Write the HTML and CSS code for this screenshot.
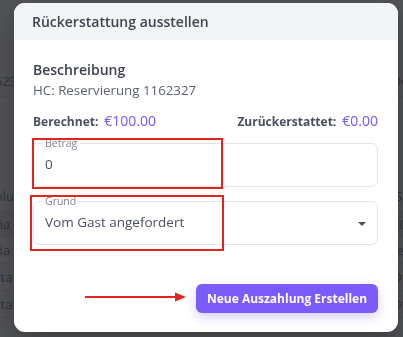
FILE: index.html
```html
<!DOCTYPE html>
<html lang="de">
  <head>
    <meta charset="UTF-8" />
    <meta name="viewport" content="width=device-width, initial-scale=1.0" />
    <title>Rückerstattung ausstellen</title>
    <link rel="stylesheet" href="styles.css">
  </head>
  <body>
    <div class="page">
      <div class="page-row page-row-top"><span>1162326</span><span>Details</span></div>
      <div class="page-row page-row-head"><span>Zahlung</span><span>Status</span></div>
      <div class="page-row page-row-alt"><span>Peña</span><span>€100.00</span></div>
      <div class="page-row"><span>Peña</span><span>Bezahlt</span></div>
      <div class="page-row page-row-low"><span>Karta</span><span>Offene</span></div>
      <div class="page-row"><span>Karta</span><span>Offene</span></div>
    </div>

    <div class="overlay">
      <div class="modal">
        <div class="modal-header">Rückerstattung ausstellen</div>

        <div class="modal-body">
          <div class="desc">
            <div class="desc-title">Beschreibung</div>
            <div class="desc-text">HC: Reservierung 1162327</div>
          </div>

          <div class="totals">
            <div class="total">
              <span class="total-label">Berechnet:</span>
              <span class="total-value">€100.00</span>
            </div>
            <div class="total">
              <span class="total-label">Zurückerstattet:</span>
              <span class="total-value">€0.00</span>
            </div>
          </div>

          <fieldset class="field">
            <legend>Betrag</legend>
            <div class="field-value">0</div>
            <div class="mark mark-amount"></div>
          </fieldset>

          <fieldset class="field">
            <legend>Grund</legend>
            <div class="field-value">Vom Gast angefordert</div>
            <span class="caret"></span>
            <div class="mark mark-reason"></div>
          </fieldset>

          <div class="footer">
            <svg class="arrow" width="101" height="10" viewBox="0 0 101 10">
              <line x1="0" y1="5" x2="92" y2="5" stroke="#e02424" stroke-width="2" />
              <polygon points="90,0.5 101,5 90,9.5" fill="#e02424" />
            </svg>
            <button class="btn">Neue Auszahlung Erstellen</button>
          </div>
        </div>
      </div>
    </div>
  </body>
</html>
```

FILE: styles.css
```css
html,
body {
  height: 100%;
  margin: 0;
  padding: 0;
  overflow: hidden;
}

body {
  background: #fff;
  font-family: "Open Sans", "Liberation Sans", sans-serif;
  color: #374151;
}

/* page behind the dialog */
.page {
  padding-top: 66px;
}

.page-row {
  display: flex;
  justify-content: space-between;
  height: 26px;
  align-items: center;
  font-size: 13px;
  color: #6b7280;
  border-bottom: 1px solid #e5e7eb;
}

.page-row span:first-child {
  margin-left: -20px;
}

.page-row span:last-child {
  margin-right: -30px;
}

.page-row-top {
  height: 30px;
  margin-bottom: 84px;
}

.page-row-head {
  height: 30px;
}

.page-row-alt {
  background: #eef0f3;
  height: 24px;
}

.overlay {
  position: fixed;
  inset: 0;
  background: rgba(31, 33, 37, 0.78);
  padding: 3px 5px 0 14px;
}

.modal {
  background: #fff;
  border-radius: 11px;
  overflow: hidden;
  height: 329px;
  box-shadow: 0 10px 25px rgba(0, 0, 0, 0.25);
}

.modal-header {
  background: #f3f4f6;
  height: 37px;
  padding-left: 18px;
  display: flex;
  align-items: center;
  font-size: 14px;
  font-weight: 600;
  color: #3f4450;
}

.modal-body {
  padding: 20px 20px 0 19px;
}

.desc-title {
  font-size: 14px;
  font-weight: 600;
  line-height: 20px;
  color: #3a3f4b;
}

.desc-text {
  font-size: 13.3px;
  line-height: 20px;
  color: #5b616d;
}

.totals {
  display: flex;
  justify-content: space-between;
  margin-top: 11px;
  line-height: 20px;
}

.total {
  display: flex;
  align-items: baseline;
  gap: 6px;
}

.total-label {
  font-size: 12px;
  font-weight: 700;
  color: #4b5060;
}

.total-value {
  font-size: 14px;
  font-weight: 500;
  color: #7557fb;
}

.field {
  position: relative;
  margin: 5px 0 0;
  border: 1px solid #e3e5e9;
  border-radius: 6px;
  padding: 0 11px;
  height: 50px;
  box-sizing: border-box;
}

.field + .field {
  margin-top: 8px;
}

.field legend {
  font-size: 10.5px;
  color: #80858f;
  padding: 0 3px;
  margin-left: -3px;
  line-height: 12px;
}

.field-value {
  font-size: 13.5px;
  line-height: 20px;
  color: #4b5060;
  margin-top: 5px;
}

.caret {
  position: absolute;
  right: 11px;
  top: 15px;
  border-left: 4px solid transparent;
  border-right: 4px solid transparent;
  border-top: 4px solid #4b5060;
}

.mark {
  position: absolute;
  border: 2px solid #e02424;
  box-sizing: border-box;
  pointer-events: none;
}

.mark-amount {
  left: -2px;
  top: -11px;
  width: 191px;
  height: 51px;
}

.mark-reason {
  left: -4px;
  top: -12px;
  width: 194px;
  height: 56px;
}

.footer {
  display: flex;
  justify-content: flex-end;
  align-items: center;
  gap: 10px;
  margin-top: 39px;
}

.arrow {
  margin-top: -3px;
}

.btn {
  border: none;
  background: #7b5cfa;
  color: #fff;
  font-family: inherit;
  font-size: 12px;
  font-weight: 700;
  height: 29px;
  width: 182px;
  border-radius: 6px;
  box-shadow: 0 4px 12px rgba(123, 92, 250, 0.3);
}
```
